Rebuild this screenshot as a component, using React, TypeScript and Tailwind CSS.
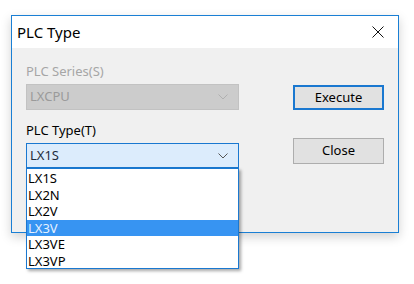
import React from 'react';

const types = ['LX1S', 'LX2N', 'LX2V', 'LX3V', 'LX3VE', 'LX3VP'];

const Chevron: React.FC<{ color: string }> = ({ color }) => (
  <svg width="10" height="6" viewBox="0 0 10 6" fill="none">
    <path d="M0.5 0.5 L5 5 L9.5 0.5" stroke={color} strokeWidth="1" />
  </svg>
);

const App: React.FC = () => {
  return (
    <div className="w-[414px] h-[284px] bg-white pt-[15px] pl-[11px] overflow-hidden" style={{ fontFamily: '"Noto Sans", "Open Sans", sans-serif' }}>
      <div className="relative w-[388px] h-[218px] border border-[#1a7fd4] bg-[#f0f0f0] shadow-[0_4px_10px_rgba(0,0,0,0.18)]">
        {/* title bar */}
        <div className="h-[32px] bg-white flex items-center justify-between pl-[5px] pr-[14px]">
          <span className="text-[15px] text-black">PLC Type</span>
          <svg width="12" height="12" viewBox="0 0 12 12">
            <path d="M0.5 0.5 L11.5 11.5 M11.5 0.5 L0.5 11.5" stroke="#111" strokeWidth="1" />
          </svg>
        </div>

        <div className="flex pl-[14px] pt-[13px]">
          {/* left column */}
          <div className="w-[213px] flex flex-col">
            <div className="h-[20px] text-[13px] leading-[20px] text-[#a6a6a6]">PLC Series(S)</div>
            <div className="mt-[3px] h-[26px] bg-[#cccccc] border border-[#c2c2c2] flex items-center justify-between pl-[3px] pr-[10px]">
              <span className="text-[13px] text-[#9a9a9a]">LXCPU</span>
              <Chevron color="#b0b0b0" />
            </div>
            <div className="mt-[10px] h-[20px] text-[13px] leading-[20px] text-black">PLC Type(T)</div>
            <div className="mt-[3px] h-[25px] bg-[#dcecfc] border border-[#1a78d0] flex items-center justify-between pl-[3px] pr-[10px]">
              <span className="text-[13px] text-[#1f2d3d]">LX1S</span>
              <Chevron color="#555" />
            </div>
          </div>

          {/* right column */}
          <div className="ml-[54px] pt-[24px] flex flex-col">
            <button className="w-[91px] h-[25px] bg-[#e1e1e1] border-2 border-[#1a78d0] text-[13px] text-black flex items-center justify-center">
              Execute
            </button>
            <button className="mt-[28px] w-[91px] h-[26px] bg-[#e1e1e1] border border-[#adadad] text-[13px] text-black flex items-center justify-center">
              Close
            </button>
          </div>
        </div>

        {/* open dropdown list */}
        <div className="absolute left-[14px] top-[152px] w-[213px] h-[101px] bg-white border border-[#1a78d0] shadow-[2px_2px_3px_rgba(0,0,0,0.35)] py-[1px]">
          {types.map((t) => (
            <div
              key={t}
              className={
                t === 'LX3V'
                  ? 'h-[16.5px] leading-[16.5px] pl-[1px] text-[13px] bg-[#3794f2] text-[#e6f1ff]'
                  : 'h-[16.5px] leading-[16.5px] pl-[1px] text-[13px] text-black'
              }
            >
              {t}
            </div>
          ))}
        </div>
      </div>
    </div>
  );
};

export default App;
